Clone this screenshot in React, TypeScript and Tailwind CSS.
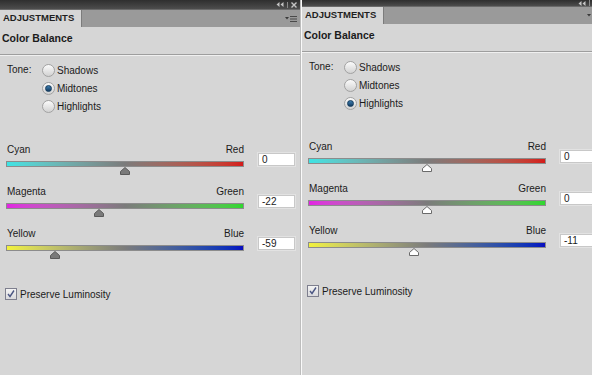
import React from "react";

const font = { fontFamily: '"Liberation Sans", Arial, sans-serif' };

type Slider = {
  left: string;
  right: string;
  value: number;
  bar: string;
};

const Thumb = ({ active }: { active: boolean }) => (
  <svg width="11" height="8" viewBox="0 0 11 8" className="block">
    <path
      d="M5.5 0.5 L10 4.5 L10 7.5 L1 7.5 L1 4.5 Z"
      fill={active ? "#7a7a7a" : "#ffffff"}
      stroke={active ? "#5a5a5a" : "#6a6a6a"}
      strokeWidth="1"
    />
  </svg>
);

const Radio = ({ checked }: { checked: boolean }) => (
  <span className="relative flex h-[13px] w-[13px] items-center justify-center rounded-full border border-[#a2a2a2] bg-gradient-to-b from-[#fbfbfb] to-[#d2d2d2]">
    {checked && (
      <span className="h-[7px] w-[7px] rounded-full border border-[#123a5c] bg-gradient-to-b from-[#3f7fb0] to-[#143d63]" />
    )}
  </span>
);

const Panel = ({
  topBar,
  tone,
  sliders,
  activeThumbs,
}: {
  topBar: string;
  tone: number;
  sliders: Slider[];
  activeThumbs: boolean;
}) => (
  <div className="flex w-[300px] shrink-0 flex-col bg-[#d6d6d6] text-[10px] text-[#1b1b1b]" style={font}>
    {/* dark title strip */}
    <div className={`flex ${topBar} items-center justify-end bg-gradient-to-b from-[#2f2f2f] to-[#4d4d4d] pr-[3px]`}>
      <div className="flex items-center gap-[3px]">
        <svg width="8" height="5" viewBox="0 0 8 5">
          <path d="M3.5 0 L0.5 2.5 L3.5 5 Z M7.5 0 L4.5 2.5 L7.5 5 Z" fill="#c4c4c4" />
        </svg>
        <span className="h-[6px] w-px bg-[#8a8a8a]" />
        <svg width="6" height="6" viewBox="0 0 6 6">
          <path d="M0.5 0.5 L5.5 5.5 M5.5 0.5 L0.5 5.5" stroke="#c4c4c4" strokeWidth="1.4" />
        </svg>
      </div>
    </div>

    {/* tab row */}
    <div className="flex h-[18px] border-t border-[#6a6a6a] bg-[#9a9a9a]">
      <div className="flex w-[81px] items-center bg-[#d6d6d6] pl-[3px] text-[9.5px] font-bold text-[#1f1f1f]">
        ADJUSTMENTS
      </div>
      <div className="flex flex-1 items-center justify-end border-l border-[#7c7c7c] pr-[3px]">
        <svg width="12" height="8" viewBox="0 0 12 8">
          <path d="M0 2 L4 2 L2 4.5 Z" fill="#3a3a3a" />
          <path d="M5 1.5 H12 M5 4 H12 M5 6.5 H12" stroke="#4a4a4a" strokeWidth="1.2" />
        </svg>
      </div>
    </div>

    {/* title */}
    <div className="h-[28px] border-b border-[#9e9e9e] pl-[2px] pt-[4px] text-[10.5px] font-bold leading-[14px]">
      Color Balance
    </div>
    <div className="h-px bg-[#f0f0f0]" />

    {/* tone */}
    <div className="mt-[5px] flex pl-[7px]">
      <div className="w-[35px] leading-[18px]">Tone:</div>
      <div className="flex flex-col">
        {["Shadows", "Midtones", "Highlights"].map((t, i) => (
          <label key={t} className="flex h-[18px] items-center gap-[2px]">
            <Radio checked={i === tone} />
            <span>{t}</span>
          </label>
        ))}
      </div>
    </div>

    {/* sliders */}
    <div className="mt-[29px] flex flex-col">
      {sliders.map((s) => (
        <div key={s.left} className="flex h-[42px] pl-[6px]">
          <div className="flex w-[238px] flex-col">
            <div className="flex h-[12px] items-center justify-between leading-[12px]">
              <span className="pl-px">{s.left}</span>
              <span>{s.right}</span>
            </div>
            <div className={`relative mt-[5px] h-[6px] border border-[#8c8c8c] ${s.bar}`}>
              <div
                className="absolute top-[5px] -translate-x-1/2"
                style={{ left: `${50 + s.value / 2}%` }}
              >
                <Thumb active={activeThumbs} />
              </div>
            </div>
          </div>
          <div className="ml-[13px] mt-[8px] flex h-[15px] w-[39px] items-center border border-[#e2e2e2] bg-white pl-[4px] text-[10px] shadow-[inset_0_0_0_1px_#c8c8c8]">
            {s.value}
          </div>
        </div>
      ))}
    </div>

    {/* preserve luminosity */}
    <label className="mt-[18px] flex h-[12px] items-center gap-[3px] pl-[5px]">
      <span className="flex h-[12px] w-[12px] items-center justify-center border border-[#7e7f8e] bg-gradient-to-b from-[#f4f4f4] to-[#d9d9dc]">
        <svg width="8" height="8" viewBox="0 0 8 8">
          <path d="M1 4 L3 6.5 L7 0.5" fill="none" stroke="#4b5683" strokeWidth="1.4" />
        </svg>
      </span>
      <span>Preserve Luminosity</span>
    </label>
    <div className="flex-1" />
  </div>
);

const cr = "bg-gradient-to-r from-[#3ce4e4] via-[#7b7b7b] to-[#d41a1a]";
const mg = "bg-gradient-to-r from-[#e222e2] via-[#7b7b7b] to-[#2ed82e]";
const yb = "bg-gradient-to-r from-[#f2f23a] via-[#7b7b7b] to-[#0a0ac0]";

export default function App() {
  return (
    <div className="flex h-[375px] w-[592px] overflow-hidden bg-[#d6d6d6]">
      <Panel
        topBar="h-[9px]"
        tone={1}
        activeThumbs
        sliders={[
          { left: "Cyan", right: "Red", value: 0, bar: cr },
          { left: "Magenta", right: "Green", value: -22, bar: mg },
          { left: "Yellow", right: "Blue", value: -59, bar: yb },
        ]}
      />
      <div className="w-px shrink-0 bg-[#bdbdbd]" />
      <div className="w-px shrink-0 bg-[#fafafa]" />
      <Panel
        topBar="h-[6px]"
        tone={2}
        activeThumbs={false}
        sliders={[
          { left: "Cyan", right: "Red", value: 0, bar: cr },
          { left: "Magenta", right: "Green", value: 0, bar: mg },
          { left: "Yellow", right: "Blue", value: -11, bar: yb },
        ]}
      />
    </div>
  );
}
